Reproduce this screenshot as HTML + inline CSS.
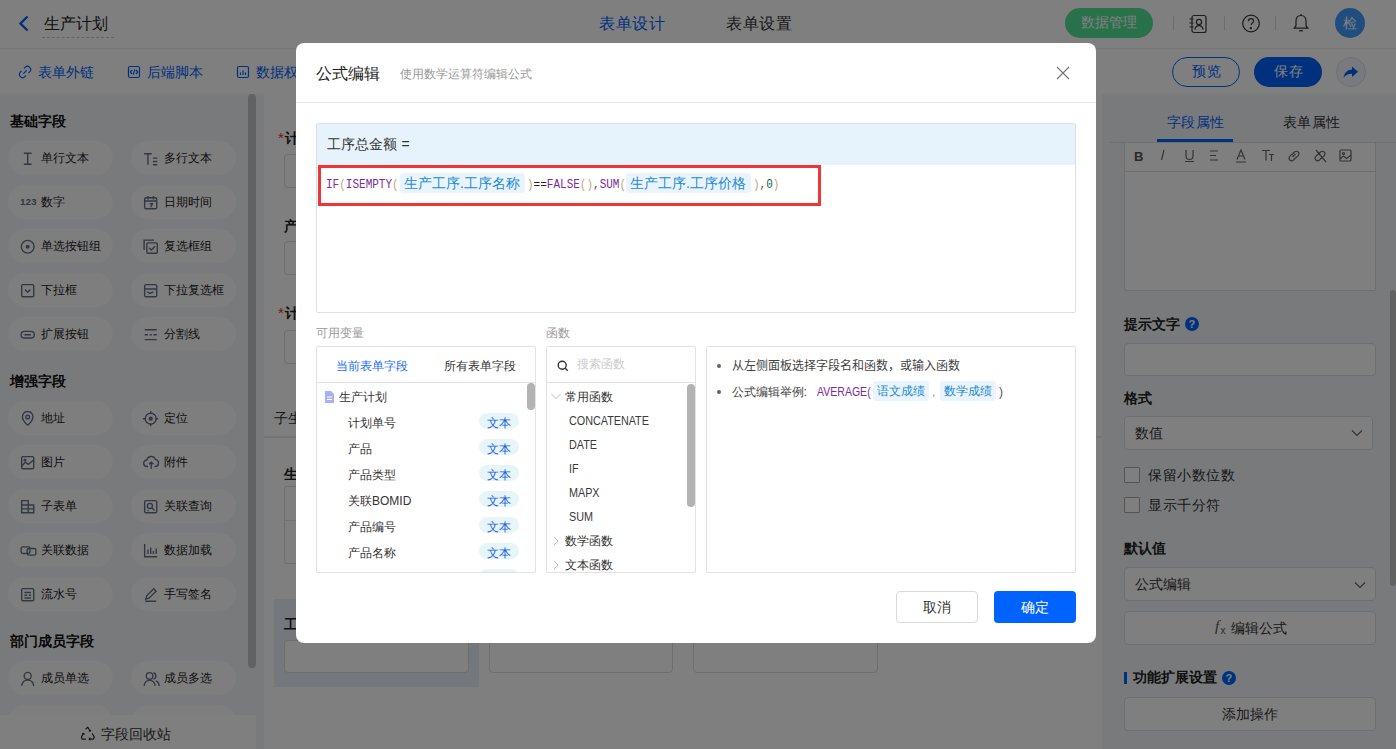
<!DOCTYPE html>
<html><head><meta charset="utf-8">
<style>
*{box-sizing:border-box;margin:0;padding:0}
html,body{width:1396px;height:749px;overflow:hidden;background:#fff;font-family:"Liberation Sans",sans-serif;}
.a{position:absolute}
.t{position:absolute;white-space:nowrap;line-height:1}
#page{position:absolute;left:0;top:0;width:1396px;height:749px;}
#mask{position:absolute;left:0;top:0;width:1396px;height:749px;background:rgba(0,0,0,.5)}
#modal{position:absolute;left:296px;top:43px;width:800px;height:600px;background:#fff;border-radius:8px;overflow:hidden}
.chip{position:absolute;width:105px;height:34px;border-radius:17px;background:#fdfdfe}
.chip svg{position:absolute;left:12px;top:10px;transform:scale(1.1);transform-origin:0 0}
.chip span{position:absolute;left:33px;top:11px;font-size:12px;line-height:12px;letter-spacing:0;color:#222;white-space:nowrap}
.sec{position:absolute;left:10px;font-size:14px;line-height:14px;font-weight:bold;color:#111;letter-spacing:0}
.inp{position:absolute;border:1px solid #dcdcdc;border-radius:4px;background:#fff}
.fm{font-family:"Liberation Mono",monospace;font-size:12px;line-height:14px;color:#7b2d97;transform:scaleX(.917);transform-origin:0 0}
.p{color:#c4a67a}
.fn{left:273px;font-size:12.4px;color:#3a3a3a;transform:scaleX(.87);transform-origin:0 0}
.rp .lab{position:absolute;left:1124px;font-size:14px;line-height:14px;font-weight:bold;color:#222;letter-spacing:0}
.rbox{position:absolute;border:1px solid #dadde3;border-radius:4px;background:#fff}
</style></head><body>
<div id="page">
  <!-- header -->
  <div class="a" style="left:0;top:0;width:1396px;height:49px;background:#fff;border-bottom:1px solid #ececec"></div>
  <svg class="a" style="left:17px;top:14px" width="14" height="19" viewBox="0 0 14 19"><polyline points="10.5,2.5 3.5,9.5 10.5,16.5" fill="none" stroke="#0062ff" stroke-width="2.4"/></svg>
  <div class="t" style="left:44px;top:16px;font-size:16px;color:#222;letter-spacing:.1px">生产计划</div>
  <div class="a" style="left:42px;top:37px;width:72px;border-top:1px dashed #c8c8c8"></div>
  <div class="t" style="left:599px;top:16px;font-size:16px;color:#0062ff;letter-spacing:.6px">表单设计</div>
  <div class="t" style="left:726px;top:16px;font-size:16px;color:#333;letter-spacing:.6px">表单设置</div>
  <div class="a" style="left:1065px;top:8px;width:88px;height:30px;border-radius:15px;background:#52e296"></div>
  <div class="t" style="left:1081px;top:15px;font-size:14px;color:#fff">数据管理</div>
  <div class="a" style="left:1173px;top:16px;width:1px;height:14px;background:#d8d8d8"></div>
  <div class="a" style="left:1224px;top:16px;width:1px;height:14px;background:#d8d8d8"></div>
  <div class="a" style="left:1275px;top:16px;width:1px;height:14px;background:#d8d8d8"></div>
  <svg class="a" style="left:1188px;top:14px" width="21" height="20" viewBox="0 0 21 20" fill="none" stroke="#3a3a3a" stroke-width="1.2"><rect x="4" y="1.5" width="14" height="17" rx="2"/><circle cx="11" cy="8" r="2.6"/><path d="M6.8 15.5c.6-2.6 2.2-3.8 4.2-3.8s3.6 1.2 4.2 3.8"/><path d="M1.5 5h4M1.5 9h4M1.5 13h4"/></svg>
  <svg class="a" style="left:1241px;top:14px" width="20" height="19" viewBox="0 0 20 19" fill="none" stroke="#3a3a3a" stroke-width="1.2"><circle cx="10" cy="9.5" r="8.3"/><path d="M7.4 7.3c0-1.6 1.2-2.6 2.6-2.6s2.6 1 2.6 2.4c0 1.8-2.5 2-2.5 4"/><circle cx="9.9" cy="14.1" r=".6" fill="#333"/></svg>
  <svg class="a" style="left:1292px;top:13px" width="18" height="20" viewBox="0 0 18 20" fill="none" stroke="#3a3a3a" stroke-width="1.2"><path d="M9 2.5c-3.3 0-5 2.6-5 5.6v4.6L2.2 15.2h13.6L14 12.7V8.1c0-3-1.7-5.6-5-5.6z"/><path d="M9 1v1.5"/><path d="M7 17.8h4"/></svg>
  <div class="a" style="left:1335px;top:8px;width:30px;height:30px;border-radius:15px;background:#3f9bff"></div>
  <div class="t" style="left:1343px;top:16px;font-size:14px;color:#fff">检</div>

  <!-- toolbar -->
  <div class="a" style="left:0;top:49px;width:1396px;height:45px;background:#fff"></div>
  <svg class="a" style="left:18px;top:65px" width="14" height="14" viewBox="0 0 14 14" fill="none" stroke="#0062ff" stroke-width="1.2"><g transform="rotate(-45 7 7)"><path d="M5.2 3.8H3.6a3.2 3.2 0 000 6.4h1.6M8.8 3.8h1.6a3.2 3.2 0 010 6.4H8.8"/><path d="M4.6 7h4.8"/></g></svg>
  <div class="t" style="left:38px;top:65px;font-size:14px;color:#0062ff">表单外链</div>
  <svg class="a" style="left:127px;top:65px" width="14" height="14" viewBox="0 0 14 14" fill="none" stroke="#0062ff" stroke-width="1.2"><rect x="1.5" y="1.5" width="11" height="11" rx="1.5"/><path d="M5 5L3.3 7 5 9M9 5l1.7 2L9 9M7.8 4.3L6.2 9.7"/></svg>
  <div class="t" style="left:147px;top:65px;font-size:14px;color:#0062ff">后端脚本</div>
  <svg class="a" style="left:236px;top:65px" width="14" height="14" viewBox="0 0 14 14" fill="none" stroke="#0062ff" stroke-width="1.2"><rect x="1.5" y="1.5" width="11" height="11" rx="1.5"/><path d="M4.5 10V7.5M7 10V5.5M9.5 10V7.5"/></svg>
  <div class="t" style="left:256px;top:65px;font-size:14px;color:#0062ff">数据权限</div>
  <div class="a" style="left:1172px;top:57px;width:68px;height:30px;border-radius:15px;border:1px solid #0062ff;background:#fff"></div>
  <div class="t" style="left:1192px;top:64px;font-size:14px;color:#0062ff;letter-spacing:.7px">预览</div>
  <div class="a" style="left:1254px;top:57px;width:68px;height:30px;border-radius:15px;background:#0062ff"></div>
  <div class="t" style="left:1274px;top:64px;font-size:14px;color:#fff;letter-spacing:.7px">保存</div>
  <div class="a" style="left:1336px;top:57px;width:30px;height:30px;border-radius:15px;border:1px solid #d3def5;background:#f1f5fd"></div>
  <svg class="a" style="left:1342px;top:63px" width="18" height="18" viewBox="0 0 18 18"><path d="M10 3.5l6 5.3-6 5.2V10.8c-4 0-6.5 1.2-8.5 4C2.3 10 5 7 10 6.6z" fill="#0062ff"/></svg>

  <!-- left panel -->
  <div class="a" style="left:0;top:94px;width:264px;height:655px;background:#f3f5f9"></div>
  <div class="sec" style="top:114px">基础字段</div>
  <div class="chip" style="left:8px;top:141px"><svg width="14" height="14" viewBox="0 0 14 14" stroke="#647084" stroke-width="1.25" fill="none"><path d="M3.5 2h7M3.5 12h7M7 2v10"/></svg><span>单行文本</span></div>
<div class="chip" style="left:131px;top:141px"><svg width="14" height="14" viewBox="0 0 14 14" stroke="#647084" stroke-width="1.25" fill="none"><path d="M1 2.5h7M4.5 2.5V12.5M9 6.5h4M9 9.5h4M9 12.5h4"/></svg><span>多行文本</span></div>
<div class="chip" style="left:8px;top:185px"><svg width="16" height="14" viewBox="0 0 16 14"><text x="0" y="9.5" font-family="Liberation Sans" font-weight="bold" font-size="9" fill="#647084">123</text></svg><span>数字</span></div>
<div class="chip" style="left:131px;top:185px"><svg width="14" height="14" viewBox="0 0 14 14" stroke="#647084" stroke-width="1.25" fill="none"><rect x="1.5" y="2.5" width="11" height="10" rx="1.2"/><path d="M1.5 5.5h11M4.5 1v3M9.5 1v3M6 8h2.5l-1.5 3"/></svg><span>日期时间</span></div>
<div class="chip" style="left:8px;top:229px"><svg width="14" height="14" viewBox="0 0 14 14" stroke="#647084" stroke-width="1.25" fill="none"><circle cx="7" cy="7" r="5.8"/><circle cx="7" cy="7" r="1.2" fill="#647084"/></svg><span>单选按钮组</span></div>
<div class="chip" style="left:131px;top:229px"><svg width="14" height="14" viewBox="0 0 14 14" stroke="#647084" stroke-width="1.25" fill="none"><path d="M1 10V1h9"/><rect x="3.5" y="3.5" width="9.5" height="9.5" rx="1"/><path d="M5.5 8l2 2 3.5-3.5"/></svg><span>复选框组</span></div>
<div class="chip" style="left:8px;top:273px"><svg width="14" height="14" viewBox="0 0 14 14" stroke="#647084" stroke-width="1.25" fill="none"><rect x="1.5" y="1.5" width="11" height="11" rx="1.2"/><path d="M4.5 6l2.5 2.5L9.5 6"/></svg><span>下拉框</span></div>
<div class="chip" style="left:131px;top:273px"><svg width="14" height="14" viewBox="0 0 14 14" stroke="#647084" stroke-width="1.25" fill="none"><rect x="1.5" y="1.5" width="11" height="11" rx="1.2"/><path d="M1.5 5.5h11M4 8l2 1.5 3.5-1.5"/></svg><span>下拉复选框</span></div>
<div class="chip" style="left:8px;top:317px"><svg width="14" height="14" viewBox="0 0 14 14" stroke="#647084" stroke-width="1.25" fill="none"><rect x="1" y="4" width="12" height="6" rx="3"/><path d="M4 7h6"/></svg><span>扩展按钮</span></div>
<div class="chip" style="left:131px;top:317px"><svg width="14" height="14" viewBox="0 0 14 14" stroke="#647084" stroke-width="1.25" fill="none"><path d="M1.5 2.5h11M1.5 11.5h11M1.5 7h3M6 7h2M9.5 7h3"/></svg><span>分割线</span></div>
<div class="chip" style="left:8px;top:401px"><svg width="14" height="14" viewBox="0 0 14 14" stroke="#647084" stroke-width="1.25" fill="none"><path d="M7 13s-4.8-4.3-4.8-7.8a4.8 4.8 0 019.6 0C11.8 8.7 7 13 7 13z"/><circle cx="7" cy="5.4" r="1.7"/></svg><span>地址</span></div>
<div class="chip" style="left:131px;top:401px"><svg width="14" height="14" viewBox="0 0 14 14" stroke="#647084" stroke-width="1.25" fill="none"><circle cx="7" cy="7" r="5"/><circle cx="7" cy="7" r="1.3" fill="#647084"/><path d="M7 0v2.5M7 11.5V14M0 7h2.5M11.5 7H14"/></svg><span>定位</span></div>
<div class="chip" style="left:8px;top:445px"><svg width="14" height="14" viewBox="0 0 14 14" stroke="#647084" stroke-width="1.25" fill="none"><rect x="1.5" y="1.5" width="11" height="11" rx="1.2"/><path d="M1.5 10l3.5-3.5 2.5 2 5-4"/><circle cx="4.5" cy="4.5" r=".8"/></svg><span>图片</span></div>
<div class="chip" style="left:131px;top:445px"><svg width="15" height="14" viewBox="0 0 15 14" stroke="#647084" stroke-width="1.25" fill="none"><path d="M4.5 10.5H3.8a3 3 0 01-.3-6A4 4 0 0111.2 4a3.3 3.3 0 01.3 6.5h-1"/><path d="M7.5 6.5v6M5.5 8.5l2-2 2 2"/></svg><span>附件</span></div>
<div class="chip" style="left:8px;top:489px"><svg width="14" height="14" viewBox="0 0 14 14" stroke="#647084" stroke-width="1.25" fill="none"><path d="M1.5 1.5h6v11h-6zM7.5 5.5h5v7h-5M1.5 5.5h6M1.5 9h11"/></svg><span>子表单</span></div>
<div class="chip" style="left:131px;top:489px"><svg width="14" height="14" viewBox="0 0 14 14" stroke="#647084" stroke-width="1.25" fill="none"><rect x="1.5" y="1.5" width="11" height="11" rx="1.2"/><circle cx="6.3" cy="6.3" r="2.3"/><path d="M8 8l2.5 2.5M4 10.5h1"/></svg><span>关联查询</span></div>
<div class="chip" style="left:8px;top:533px"><svg width="16" height="14" viewBox="0 0 16 14" stroke="#647084" stroke-width="1.25" fill="none"><rect x="1" y="3.5" width="8" height="6" rx="1.5"/><rect x="6.5" y="5" width="8" height="6" rx="1.5"/></svg><span>关联数据</span></div>
<div class="chip" style="left:131px;top:533px"><svg width="14" height="14" viewBox="0 0 14 14" stroke="#647084" stroke-width="1.25" fill="none"><path d="M1.5 1v11.5H13M4.5 10V6M7 10V4M9.5 10V7M12 10V5"/></svg><span>数据加载</span></div>
<div class="chip" style="left:8px;top:577px"><svg width="14" height="14" viewBox="0 0 14 14" stroke="#647084" stroke-width="1.25" fill="none"><rect x="1.5" y="1.5" width="11" height="11" rx="1.2"/><path d="M4 5h6M4 7.5h2.5M8 7.5h2M4 10h6"/></svg><span>流水号</span></div>
<div class="chip" style="left:131px;top:577px"><svg width="14" height="14" viewBox="0 0 14 14" stroke="#647084" stroke-width="1.25" fill="none"><path d="M2.5 11l1-3.2 6.2-6.2 2.2 2.2-6.2 6.2zM2 13h10"/></svg><span>手写签名</span></div>
<div class="chip" style="left:8px;top:661px"><svg width="14" height="14" viewBox="0 0 14 14" stroke="#647084" stroke-width="1.25" fill="none"><circle cx="7" cy="4.5" r="3.2"/><path d="M1.5 13.5c.5-3.5 2.6-5.2 5.5-5.2s5 1.7 5.5 5.2"/></svg><span>成员单选</span></div>
<div class="chip" style="left:131px;top:661px"><svg width="16" height="14" viewBox="0 0 16 14" stroke="#647084" stroke-width="1.25" fill="none"><circle cx="6" cy="4.5" r="3"/><path d="M1 13.5c.4-3.3 2.3-5 5-5s4.6 1.7 5 5M9.5 1.6a3 3 0 010 5.8M11.8 9c1.7.7 2.7 2.2 3 4.5"/></svg><span>成员多选</span></div>
<div class="chip" style="left:8px;top:705px"><span>部门单选</span></div>
<div class="chip" style="left:131px;top:705px"><span>部门多选</span></div>

  <div class="sec" style="top:374px">增强字段</div>
  <div class="sec" style="top:634px">部门成员字段</div>
  <div class="a" style="left:248px;top:94px;width:8px;height:574px;border-radius:4px;background:#c4c4c4"></div>
  <div class="a" style="left:0;top:715px;width:256px;height:34px;background:#fefefe"></div>
  <svg class="a" style="left:80px;top:726px" width="16" height="15" viewBox="0 0 16 15" fill="none" stroke="#333" stroke-width="1.2" stroke-linejoin="round"><path d="M5.6 3.2L7.8 1.2l2.3 3.9"/><path d="M9 4.6l1.3.6.4-1.4"/><path d="M12.2 7.4l2.2 3.8-1.2 1.9H9"/><path d="M10.4 11.8L9 13.1l1.4 1.1"/><path d="M6 13.1H2.3l-1-1.9 2.2-3.8"/><path d="M2.2 8.3l1.3-1 1 1.2"/></svg>
  <div class="t" style="left:101px;top:727px;font-size:14px;color:#333">字段回收站</div>

  <!-- center canvas -->
  <div class="a" style="left:264px;top:94px;width:838px;height:655px;background:#fff"></div>
  <div class="t" style="left:278px;top:130px;font-size:15px;color:#e03030">*</div><div class="t" style="left:285px;top:131px;font-size:14px;font-weight:bold;color:#222">计划单号</div>
  <div class="inp" style="left:284px;top:154px;width:300px;height:34px"></div>
  <div class="t" style="left:284px;top:219px;font-size:14px;font-weight:bold;color:#222">产品</div>
  <div class="inp" style="left:284px;top:241px;width:300px;height:34px"></div>
  <div class="t" style="left:278px;top:305px;font-size:15px;color:#e03030">*</div><div class="t" style="left:285px;top:306px;font-size:14px;font-weight:bold;color:#222">计划数量</div>
  <div class="inp" style="left:284px;top:330px;width:300px;height:34px"></div>
  <div class="t" style="left:274px;top:411px;font-size:14px;color:#333">子生产工序</div>
  <div class="a" style="left:264px;top:436px;width:838px;height:2px;background:#ebebeb"></div>
  <div class="t" style="left:284px;top:467px;font-size:14px;font-weight:bold;color:#222">生产工序</div>
  <div class="inp" style="left:284px;top:486px;width:400px;height:78px;border-radius:3px"></div>
  <div class="a" style="left:285px;top:520px;width:398px;height:1px;background:#e4e4e4"></div>
  <div class="a" style="left:274px;top:599px;width:205px;height:88px;background:#e9eef8"></div>
  <div class="t" style="left:284px;top:617px;font-size:14px;font-weight:bold;color:#222">工序总金额</div>
  <div class="inp" style="left:284px;top:640px;width:185px;height:33px"></div>
  <div class="inp" style="left:489px;top:640px;width:184px;height:33px"></div>
  <div class="inp" style="left:693px;top:640px;width:185px;height:33px"></div>

  <!-- right panel -->
  <div class="rp">
  <div class="a" style="left:1102px;top:94px;width:294px;height:655px;background:#f3f5f9"></div>
  <div class="t" style="left:1167px;top:115px;font-size:14px;color:#0062ff;letter-spacing:.3px">字段属性</div>
  <div class="t" style="left:1283px;top:115px;font-size:14px;color:#333;letter-spacing:.3px">表单属性</div>
  <div class="rbox" style="left:1124px;top:130px;width:252px;height:161px;border-radius:2px;background:#fff"></div>
  <div class="a" style="left:1102px;top:94px;width:294px;height:48px;background:#f3f5f9"></div>
  <div class="t" style="left:1167px;top:115px;font-size:14px;color:#0062ff;letter-spacing:.3px">字段属性</div>
  <div class="t" style="left:1283px;top:115px;font-size:14px;color:#333;letter-spacing:.3px">表单属性</div>
  <div class="a" style="left:1110px;top:142px;width:286px;height:1px;background:#dcdfe6"></div>
  <div class="a" style="left:1157px;top:139px;width:76px;height:3px;background:#0062ff"></div>
  <div class="a" style="left:1125px;top:143px;width:250px;height:29px;background:#fff;border-bottom:1px solid #dadde3"></div>
  <svg class="a" style="left:1124px;top:142px" width="252" height="28" viewBox="0 0 252 28" fill="none" stroke="#666" stroke-width="1.2">
    <text x="10" y="18.5" font-family="Liberation Sans" font-size="13" font-weight="bold" fill="#555" stroke="none">B</text>
    <path d="M40 8l-2.5 10"/>
    <path d="M62 8v6a3.5 3.5 0 007 0V8M61 19.5h9"/>
    <path d="M86 9h8M86 13.5h6M86 18h8"/>
    <path d="M113 17.5l4-9.5 4 9.5M114.5 14h5M112 20h10"/>
    <path d="M138 8.5h8M142 8.5v10M145 12.5h5M147.5 12.5V19"/>
    <path d="M168 12.5l2.5-2.5a2.6 2.6 0 013.7 3.7l-2.5 2.5M172 15.5l-2.5 2.5a2.6 2.6 0 01-3.7-3.7l2.5-2.5M168.5 15l3-3"/>
    <path d="M194 12.5l2.5-2.5a2.6 2.6 0 013.7 3.7l-2.5 2.5M198 15.5l-2.5 2.5a2.6 2.6 0 01-3.7-3.7l2.5-2.5M192 8l10 12"/>
    <rect x="216" y="8" width="11" height="11" rx="1"/><circle cx="219.5" cy="11.5" r="1"/><path d="M216 17l3.5-3 3 2.5 4.5-3.5"/>
  </svg>
  <div class="lab" style="top:317px">提示文字</div>
  <div class="a" style="left:1185px;top:317px;width:14px;height:14px;border-radius:7px;background:#0062ff"></div>
  <div class="t" style="left:1188.5px;top:318.5px;font-size:11px;font-weight:bold;color:#fff">?</div>
  <div class="rbox" style="left:1124px;top:343px;width:252px;height:33px"></div>
  <div class="lab" style="top:391px">格式</div>
  <div class="rbox" style="left:1124px;top:416px;width:249px;height:34px"></div>
  <div class="t" style="left:1135px;top:426px;font-size:14px;color:#333">数值</div>
  <svg class="a" style="left:1351px;top:429px" width="12" height="8" viewBox="0 0 12 8" fill="none" stroke="#666" stroke-width="1.2"><path d="M1 1.5l5 5 5-5"/></svg>
  <div class="a" style="left:1124px;top:467px;width:16px;height:16px;border:1px solid #a8a8a8;border-radius:1px;background:#fff"></div>
  <div class="t" style="left:1148px;top:468px;font-size:14px;color:#333;letter-spacing:.6px">保留小数位数</div>
  <div class="a" style="left:1124px;top:497px;width:16px;height:16px;border:1px solid #a8a8a8;border-radius:1px;background:#fff"></div>
  <div class="t" style="left:1148px;top:498px;font-size:14px;color:#333;letter-spacing:.6px">显示千分符</div>
  <div class="lab" style="top:541px">默认值</div>
  <div class="rbox" style="left:1124px;top:567px;width:252px;height:34px"></div>
  <div class="t" style="left:1135px;top:577px;font-size:14px;color:#333">公式编辑</div>
  <svg class="a" style="left:1354px;top:581px" width="12" height="8" viewBox="0 0 12 8" fill="none" stroke="#666" stroke-width="1.2"><path d="M1 1.5l5 5 5-5"/></svg>
  <div class="rbox" style="left:1124px;top:611px;width:252px;height:34px"></div>
  <div class="t" style="left:1215px;top:619px;font-size:15px;font-style:italic;font-family:'Liberation Serif',serif;color:#555">f</div><div class="t" style="left:1220.5px;top:626px;font-size:10px;color:#555">x</div>
  <div class="t" style="left:1231px;top:620.5px;font-size:14px;color:#333">编辑公式</div>
  <div class="a" style="left:1124px;top:672px;width:3px;height:12px;background:#0062ff"></div>
  <div class="lab" style="left:1133px;top:670px">功能扩展设置</div>
  <div class="a" style="left:1222px;top:671px;width:14px;height:14px;border-radius:7px;background:#0062ff"></div>
  <div class="t" style="left:1225.5px;top:672.5px;font-size:11px;font-weight:bold;color:#fff">?</div>
  <div class="rbox" style="left:1124px;top:697px;width:252px;height:34px"></div>
  <div class="t" style="left:1222px;top:707px;font-size:14px;color:#333">添加操作</div>
  <div class="a" style="left:1390px;top:290px;width:6px;height:296px;border-radius:3px;background:#c4c4c4"></div>

</div>
</div>
<div id="mask"></div>
<div id="modal">
  <div class="t" style="left:20px;top:23px;font-size:16px;color:#222;letter-spacing:.1px">公式编辑</div>
  <div class="t" style="left:104px;top:25px;font-size:12px;color:#999">使用数学运算符编辑公式</div>
  <svg class="a" style="left:760px;top:23px" width="14" height="14" viewBox="0 0 14 14" stroke="#777" stroke-width="1.15"><path d="M1 1l12 12M13 1L1 13"/></svg>
  <div class="a" style="left:0;top:59px;width:800px;height:1px;background:#e8e8e8"></div>
  <!-- formula box -->
  <div class="a" style="left:20px;top:80px;width:760px;height:190px;border:1px solid #dfdfdf;border-radius:2px;background:#fff"></div>
  <div class="a" style="left:21px;top:81px;width:758px;height:41px;background:#e6f3fd"></div>
  <div class="t" style="left:31px;top:94px;font-size:14px;color:#333;letter-spacing:.1px">工序总金额 =</div>
  <div class="a" style="left:22px;top:122px;width:503px;height:41px;border:3px solid #f03535"></div>
  <div class="t fm" style="left:30px;top:135px"><span>IF</span><span class="p">(</span>ISEMPTY<span class="p">(</span></div>
  <div class="a" style="left:104px;top:130px;width:125px;height:20px;border-radius:3px;background:#eaf4fe"></div>
  <div class="t" style="left:108px;top:133px;font-size:14px;color:#1b8bd3">生产工序.工序名称</div>
  <div class="t fm" style="left:231px;top:135px"><span class="p">)</span><span style="color:#222">==</span>FALSE<span class="p">()</span><span style="color:#555">,</span>SUM<span class="p">(</span></div>
  <div class="a" style="left:330px;top:130px;width:125px;height:20px;border-radius:3px;background:#eaf4fe"></div>
  <div class="t" style="left:334px;top:133px;font-size:14px;color:#1b8bd3">生产工序.工序价格</div>
  <div class="t fm" style="left:457px;top:135px"><span class="p">)</span><span style="color:#555">,</span><span style="color:#116644">0</span><span class="p">)</span></div>
  <!-- labels -->
  <div class="t" style="left:20px;top:284px;font-size:12px;color:#999">可用变量</div>
  <div class="t" style="left:250px;top:284px;font-size:12px;color:#999">函数</div>
  <!-- variables box -->
  <div class="a" style="left:20px;top:303px;width:220px;height:227px;border:1px solid #e2e2e2;border-radius:2px"></div>
  <div class="a" style="left:21px;top:339px;width:218px;height:1px;background:#e2e2e2"></div>
  <div class="t" style="left:40px;top:317px;font-size:12px;color:#1a6dff">当前表单字段</div>
  <div class="t" style="left:148px;top:317px;font-size:12px;color:#333">所有表单字段</div>
  <div class="a" style="left:231px;top:340px;width:8px;height:27px;border-radius:4px;background:#b3b3b3"></div>
  <svg class="a" style="left:28px;top:348px" width="11" height="12" viewBox="0 0 11 12"><path d="M1 0h6l3 3v9H1z" fill="#a5b0f5"/><path d="M3 6h5M3 8.5h5" stroke="#fff" stroke-width="1"/></svg>
  <div class="t" style="left:43px;top:348px;font-size:12px;color:#333">生产计划</div>
  <div class="a" style="left:21px;top:339px;width:218px;height:190px;overflow:hidden">
<div class="t" style="left:31px;top:35px;font-size:12px;color:#333">计划单号</div>
<div class="a" style="left:162px;top:31px;width:40px;height:16px;border-radius:8px;background:#e6f6f8"></div>
<div class="t" style="left:170px;top:35px;font-size:12px;color:#1e5ee6">文本</div>
<div class="t" style="left:31px;top:61px;font-size:12px;color:#333">产品</div>
<div class="a" style="left:162px;top:57px;width:40px;height:16px;border-radius:8px;background:#e6f6f8"></div>
<div class="t" style="left:170px;top:61px;font-size:12px;color:#1e5ee6">文本</div>
<div class="t" style="left:31px;top:87px;font-size:12px;color:#333">产品类型</div>
<div class="a" style="left:162px;top:83px;width:40px;height:16px;border-radius:8px;background:#e6f6f8"></div>
<div class="t" style="left:170px;top:87px;font-size:12px;color:#1e5ee6">文本</div>
<div class="t" style="left:31px;top:113px;font-size:12px;color:#333">关联BOMID</div>
<div class="a" style="left:162px;top:109px;width:40px;height:16px;border-radius:8px;background:#e6f6f8"></div>
<div class="t" style="left:170px;top:113px;font-size:12px;color:#1e5ee6">文本</div>
<div class="t" style="left:31px;top:139px;font-size:12px;color:#333">产品编号</div>
<div class="a" style="left:162px;top:135px;width:40px;height:16px;border-radius:8px;background:#e6f6f8"></div>
<div class="t" style="left:170px;top:139px;font-size:12px;color:#1e5ee6">文本</div>
<div class="t" style="left:31px;top:165px;font-size:12px;color:#333">产品名称</div>
<div class="a" style="left:162px;top:161px;width:40px;height:16px;border-radius:8px;background:#e6f6f8"></div>
<div class="t" style="left:170px;top:165px;font-size:12px;color:#1e5ee6">文本</div>
<div class="a" style="left:162px;top:187px;width:40px;height:16px;border-radius:8px;background:#e6f6f8"></div>
<div class="t" style="left:170px;top:191px;font-size:12px;color:#1e5ee6">文本</div>
  </div>
  <!-- functions box -->
  <div class="a" style="left:250px;top:303px;width:150px;height:227px;border:1px solid #e2e2e2;border-radius:2px"></div>
  <div class="a" style="left:251px;top:339px;width:148px;height:1px;background:#e2e2e2"></div>
  <svg class="a" style="left:261px;top:317px" width="12" height="12" viewBox="0 0 12 12" fill="none" stroke="#333" stroke-width="1.4"><circle cx="5.2" cy="5.2" r="4"/><path d="M8.2 8.2l2.6 2.6"/></svg>
  <div class="t" style="left:281px;top:315px;font-size:12px;color:#ccc">搜索函数</div>
  <div class="a" style="left:391px;top:341px;width:8px;height:123px;border-radius:4px;background:#b3b3b3"></div>
  <svg class="a" style="left:255px;top:350px" width="10" height="7" viewBox="0 0 10 7" fill="none" stroke="#bbb" stroke-width="1"><path d="M.5 1l4.5 4.5L9.5 1"/></svg>
  <div class="t" style="left:269px;top:348px;font-size:12px;color:#333">常用函数</div>
  <div class="t fn" style="top:372px">CONCATENATE</div>
  <div class="t fn" style="top:396px">DATE</div>
  <div class="t fn" style="top:420px">IF</div>
  <div class="t fn" style="top:444px">MAPX</div>
  <div class="t fn" style="top:468px">SUM</div>
  <svg class="a" style="left:257px;top:493px" width="6" height="10" viewBox="0 0 6 10" fill="none" stroke="#bbb" stroke-width="1"><path d="M1 1l4 4-4 4"/></svg>
  <div class="t" style="left:269px;top:492px;font-size:12px;color:#333">数学函数</div>
  <svg class="a" style="left:257px;top:517px" width="6" height="10" viewBox="0 0 6 10" fill="none" stroke="#bbb" stroke-width="1"><path d="M1 1l4 4-4 4"/></svg>
  <div class="t" style="left:269px;top:516px;font-size:12px;color:#333">文本函数</div>
  <!-- help box -->
  <div class="a" style="left:410px;top:303px;width:370px;height:227px;border:1px solid #e2e2e2;border-radius:2px"></div>
  <div class="a" style="left:421px;top:321px;width:4px;height:4px;border-radius:2px;background:#5c6372"></div>
  <div class="t" lang="zh-CN" style="left:436px;top:317px;font-size:12px;color:#444">从左侧面板选择字段名和函数，或输入函数</div>
  <div class="a" style="left:421px;top:347px;width:4px;height:4px;border-radius:2px;background:#5c6372"></div>
  <div class="t" style="left:436px;top:343px;font-size:12px;color:#444">公式编辑举例</div><div class="t" style="left:507.5px;top:343px;font-size:12.5px;color:#444">:</div><div class="t" style="left:520.5px;top:342.5px;font-size:12.4px;color:#7b2d97;transform:scaleX(.85);transform-origin:0 0">AVERAGE(</div>
  <div class="a" style="left:577px;top:338px;width:56px;height:20px;border-radius:3px;background:#eaf4fe"></div>
  <div class="t" style="left:581px;top:342px;font-size:12px;color:#1b8bd3">语文成绩</div>
  <div class="t" style="left:636px;top:343px;font-size:12px;color:#999">,</div>
  <div class="a" style="left:644px;top:338px;width:56px;height:20px;border-radius:3px;background:#eaf4fe"></div>
  <div class="t" style="left:648px;top:342px;font-size:12px;color:#1b8bd3">数学成绩</div>
  <div class="t" style="left:703px;top:343px;font-size:12px;color:#555">)</div>
  <!-- footer -->
  <div class="a" style="left:600px;top:548px;width:82px;height:32px;border:1px solid #d9d9d9;border-radius:4px;background:#fff"></div>
  <div class="t" style="left:627px;top:557px;font-size:14px;color:#333">取消</div>
  <div class="a" style="left:698px;top:548px;width:82px;height:32px;border-radius:4px;background:#0062ff"></div>
  <div class="t" style="left:725px;top:557px;font-size:14px;color:#fff">确定</div>
</div>

</body></html>
